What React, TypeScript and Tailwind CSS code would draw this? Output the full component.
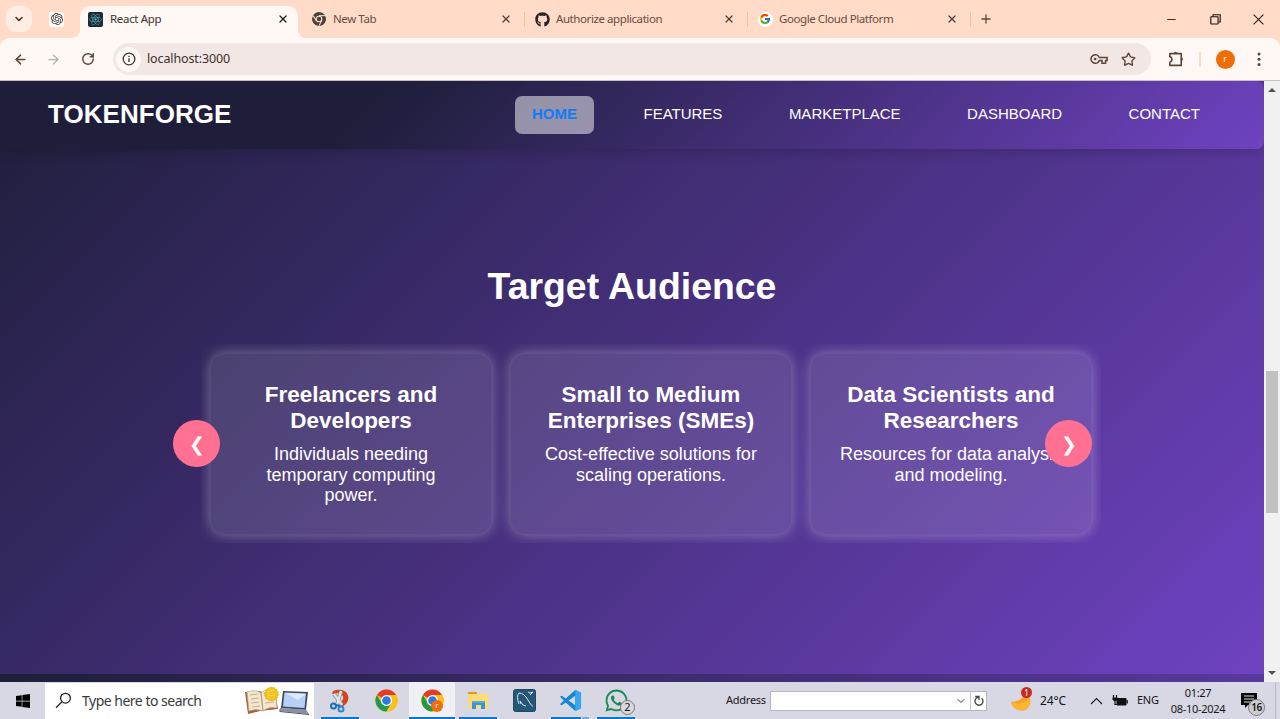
import React from "react";
import { X, Plus, ArrowLeft, ArrowRight, RotateCw, ChevronDown, ChevronUp, Minus, Star } from "lucide-react";
import { FaGithub, FaWindows, FaWhatsapp, FaReact } from "react-icons/fa";
import { FcGoogle } from "react-icons/fc";
import { SiOpenai } from "react-icons/si";
import { VscVscode } from "react-icons/vsc";

function ChromeIcon({ size, mono = false }: { size: number; mono?: boolean }) {
  const c = mono ? ["#4a4340", "#4a4340", "#4a4340"] : ["#e33b2e", "#fbc116", "#229a48"];
  const gap = mono ? "#ffdbc8" : "none";
  return (
    <svg width={size} height={size} viewBox="0 0 48 48">
      <circle cx="24" cy="24" r="23" fill={c[1]} />
      <path d="M24 24 4 12.5A23 23 0 0 1 44 12.5L34.4 18Z" fill={c[0]} stroke="none" />
      <path d="M4 12.5A23 23 0 0 0 24 47L34 29.5 24 34 14.5 30.5Z" fill={c[2]} />
      <path d="M4 12.5 14.5 30.5M44 13H24M24 47 34 29.5" stroke={gap} strokeWidth="3" fill="none" />
      <path d="M24 12.5H44.5A23 23 0 0 1 24 47L34 30Z" fill={c[1]} />
      {mono && <path d="M24 12.5H44.5M4 12.5 15 30M24 47 34 29" stroke={gap} strokeWidth="3" />}
      <circle cx="24" cy="24" r="11.5" fill={mono ? gap : "#fff"} />
      <circle cx="24" cy="24" r={mono ? 7.5 : 9} fill={mono ? c[0] : "#2c7be5"} />
    </svg>
  );
}

function Tab({ icon, title, divider }: { icon: React.ReactNode; title: string; divider?: boolean }) {
  return (
    <div className="relative flex h-[38px] w-[223px] items-center pr-[9px] pl-[13px] text-[#6b4b3f]">
      <span className="flex w-4 justify-center">{icon}</span>
      <span className="ml-[6px] flex-1 text-[11.5px] tracking-[-0.42px]">{title}</span>
      <X size={12} strokeWidth={2.5} color="#523d34" />
      {divider && <span className="absolute -right-[4px] h-[15px] w-[1.5px] bg-[#ffbd94]" />}
    </div>
  );
}

function Browser() {
  return (
    <div className="h-[81px] bg-[#ffdbc8] text-[#3e302b]" style={{ fontFamily: '"Noto Sans", sans-serif' }}>
      <div className="flex h-[38px] items-center">
        <div className="ml-[6px] flex size-[26px] items-center justify-center rounded-[9px] bg-[#ffede4]">
          <ChevronDown size={12} strokeWidth={3} />
        </div>
        <div className="ml-[17px] flex size-[15px] items-center justify-center rounded-[3px] bg-white">
          <SiOpenai size={12} />
        </div>
        <div className="relative ml-[16px] flex h-[32px] w-[218px] items-center self-end rounded-t-[10px] bg-[#fff8f5] pr-[9px] pb-[6px] pl-[8px]">
          <svg className="absolute bottom-0 -left-2" width="8" height="8"><path d="M8 0V8H0A8 8 0 0 0 8 0Z" fill="#fff8f5" /></svg>
          <svg className="absolute -right-2 bottom-0" width="8" height="8"><path d="M0 0V8H8A8 8 0 0 1 0 0Z" fill="#fff8f5" /></svg>
          <span className="flex size-[15px] items-center justify-center rounded-[2px] bg-[#20292f]">
            <FaReact size={13} color="#4aa9c4" />
          </span>
          <span className="ml-[7px] flex-1 text-[11.5px] tracking-[-0.32px]">React App</span>
          <X size={12} strokeWidth={2.5} color="#221a17" />
        </div>
        <Tab icon={<ChromeIcon size={14} mono />} title="New Tab" divider />
        <Tab icon={<FaGithub size={15} color="#292322" />} title="Authorize application" divider />
        <Tab icon={<span className="rounded-full bg-white p-[1.5px]"><FcGoogle size={12} /></span>} title="Google Cloud Platform" divider />
        <Plus className="ml-[12px]" size={14} strokeWidth={2.2} color="#5c4439" />
        <div className="ml-auto flex items-center gap-[32px] pr-[16px]">
          <Minus size={13} strokeWidth={2} />
          <svg width="11" height="11" viewBox="0 0 11 11" fill="none" stroke="#17110e" strokeWidth="1.1">
            <rect x="0.8" y="2.7" width="7.3" height="7.3" rx=".5" /><path d="M3 2.5V.8H10.2V8H8.3" />
          </svg>
          <svg width="11" height="11" viewBox="0 0 11 11" stroke="#2b211d" strokeWidth="1.1"><path d="M.6.6 10.4 10.4M10.4.6.6 10.4" /></svg>
        </div>
      </div>
      <div className="flex h-[43px] items-center rounded-t-[9px] border-b border-[#c9bfc4] bg-[#fff8f5] pl-[13px]">
        <ArrowLeft size={15} color="#5c4439" strokeWidth={2.3} />
        <ArrowRight className="ml-[18px]" size={15} color="#b5aaa6" strokeWidth={2} />
        <RotateCw className="ml-[20px]" size={14} color="#5c4439" strokeWidth={2.5} />
        <div className="ml-[18px] flex h-[32px] w-[1038px] items-center rounded-full bg-[#f2e7e4] pr-[15px] pl-[3px]">
          <span className="flex size-[25px] items-center justify-center rounded-full bg-[#fff8f5]">
            <svg width="14" height="14" viewBox="0 0 14 14" fill="none" stroke="#3f3532"><circle cx="7" cy="7" r="5.8" strokeWidth="1.3" /><path d="M7 6.2V10M7 3.8V5.1" strokeWidth="1.4" /></svg>
          </span>
          <span className="ml-[6px] flex-1 pt-px text-[12.5px] tracking-[-0.12px]">localhost:3000</span>
          <svg width="18" height="12" viewBox="0 0 18 12" fill="none" stroke="#5c4439" strokeWidth="1.5"><path d="M9.3 4.6A4.3 4.3 0 1 0 9.3 7.4H12V10.2H15.6V7.4H17.1V4.6Z" /><circle cx="5.2" cy="6" r="1.3" fill="#5c4439" stroke="none" /></svg>
          <Star className="ml-[13px]" size={15} color="#5c4439" strokeWidth={2.2} />
        </div>
        <svg className="ml-[17px]" width="17" height="18" viewBox="0 0 17 18" fill="none" stroke="#5c4439" strokeWidth="1.6"><path d="M1.8 3.6H13.2V15.4H1.8V12.2C4.5 11.8 4.5 7.2 1.8 6.8Z" strokeLinejoin="round" /><path d="M5.8 3.5A1.9 1.9 0 0 1 9.4 3.5ZM13.4 7.5A1.9 1.9 0 0 1 13.4 11Z" fill="#5c4439" strokeWidth=".8" /></svg>
        <span className="ml-[14px] h-[15px] w-[1.5px] bg-[#ffdbc8]" />
        <span className="ml-[15px] flex size-[19px] items-center justify-center rounded-full bg-[#f06c05] text-[9px] text-white">r</span>
        <svg className="ml-[22px]" width="4" height="15" fill="#5c4439"><circle cx="2" cy="2" r="1.5" /><circle cx="2" cy="7.3" r="1.5" /><circle cx="2" cy="12.6" r="1.5" /></svg>
      </div>
    </div>
  );
}

function Header() {
  return (
    <header className="relative flex h-[68px] items-center rounded-r-lg bg-[linear-gradient(135deg,#1e1e3a_30%,#6f42c1_100%)] pr-[47px] pb-px pl-[48px] shadow-[0_4px_10px_rgba(0,0,0,0.15)]">
      <div className="text-[26px] font-bold tracking-[0.05px]">TOKENFORGE</div>
      <nav className="ml-auto flex items-center gap-[32.5px] text-[15px]">
        <a className="flex h-[38px] w-[79px] items-center justify-center rounded-[7px] bg-white/50 font-bold text-[#147bf4]">HOME</a>
        <a className="px-[17px]">FEATURES</a>
        <a className="px-[17px]">MARKETPLACE</a>
        <a className="px-[17px]">DASHBOARD</a>
        <a className="px-[17px]">CONTACT</a>
      </nav>
    </header>
  );
}

const audience = [
  { title: ["Freelancers and", "Developers"], text: ["Individuals needing", "temporary computing", "power."] },
  { title: ["Small to Medium", "Enterprises (SMEs)"], text: ["Cost-effective solutions for", "scaling operations."] },
  { title: ["Data Scientists and", "Researchers"], text: ["Resources for data analysis", "and modeling."] },
];

function Page() {
  return (
    <div className="flex h-[601px]">
      <div className="flex w-[1264px] flex-col overflow-hidden text-white" style={{ fontFamily: '"Liberation Sans", Arial, sans-serif' }}>
        <section className="h-[593px] bg-[linear-gradient(135deg,#1e1e3a,#6f42c1)]">
          <Header />
          <h2 className="mt-[113px] text-center text-[37.4px] leading-[48px] font-bold">Target Audience</h2>
          <div className="relative mt-[34px] ml-[173px] w-[928px] pl-[28px]">
            <div className="flex h-[199px] w-[900px] overflow-hidden">
              {audience.map((a) => (
                <div key={a.title[0]} className="w-[300px] shrink-0 px-[9px] pt-[9px]">
                  <div className="h-[182px] rounded-[15px] border border-white/5 bg-white/12 pt-[28px] text-center shadow-[0_0_14px_rgba(255,255,255,0.34)]">
                    <h3 className="text-[22.5px] leading-[26px] font-bold">{a.title.map((t) => <div key={t}>{t}</div>)}</h3>
                    <p className="mt-[10px] text-[18px] leading-[20.5px]">{a.text.map((t) => <span className="block" key={t}>{t}</span>)}</p>
                  </div>
                </div>
              ))}
            </div>
            <button className="absolute top-[76px] left-0 flex size-[47px] items-center justify-center rounded-full bg-[#ff7092] pt-[3px] text-[19px]">❮</button>
            <button className="absolute top-[76px] left-[872px] flex size-[47px] items-center justify-center rounded-full bg-[#ff7092] pt-[3px] text-[19px]">❯</button>
          </div>
        </section>
        <div className="h-[8px] bg-[linear-gradient(90deg,#1e1e3a,#58389e)]" />
      </div>
      <div className="flex flex-1 flex-col items-center bg-[#f1f1f1] py-[6px]">
        <svg width="8" height="5"><path d="M0 5 4 1 8 5Z" fill="#505050" /></svg>
        <div className="mt-[279px] h-[142px] w-[12px] bg-[#c1c1c1]" />
        <svg className="mt-auto" width="8" height="5"><path d="M0 0 4 4 8 0Z" fill="#505050" /></svg>
      </div>
    </div>
  );
}

function Task({ children, open, active, narrow }: { children: React.ReactNode; open?: boolean; active?: boolean; narrow?: boolean }) {
  return (
    <div className={`relative flex h-full w-[46px] shrink-0 items-center justify-center ${active ? "bg-[#f0eff6]" : ""}`}>
      {children}
      {open && <span className={`absolute bottom-0 h-[2px] bg-[#0b78d0] ${active ? "w-[46px]" : narrow ? "left-[4px] w-[30px]" : "w-[38px]"}`} />}
    </div>
  );
}

function Taskbar() {
  return (
    <div className="flex h-[37px] items-center bg-[#d8d7e4] text-[#161616]" style={{ fontFamily: '"Noto Sans", sans-serif' }}>
      <div className="flex w-[45px] justify-center"><FaWindows size={16} color="#000" /></div>
      <div className="flex h-[36px] w-[269px] items-center bg-white pl-[10px]">
        <svg width="17" height="17" viewBox="0 0 17 17" fill="none" stroke="#222" strokeWidth="1.3"><circle cx="10.5" cy="6.2" r="4.9" /><path d="M7 9.8 1 15.7" /></svg>
        <span className="ml-[10px] flex-1 text-[14px] tracking-[-0.5px] text-[#3a3a3a]">Type here to search</span>
        <svg className="mr-[4px]" width="66" height="30" viewBox="0 0 66 30">
          <path d="M1 6 4 28 16 25 34 23 31 4 19 6 15 5Z" fill="#a95d3c" />
          <path d="M3 6Q12 3 17 7L19 25Q12 22 5 25ZM17 7Q24 1 31 4L33 22Q25 20 19 25Z" fill="#f2e6cd" stroke="#bcab8d" strokeWidth=".7" />
          <path d="M6 9 14 8M7 13 15 12M7 17 15 16M8 21 16 20M20 9 27 7M21 13 29 12M21 17 30 16M17 7 19 25" stroke="#aa9c83" strokeWidth=".7" />
          <circle cx="27.5" cy="8" r="6.7" fill="#f3c51c" stroke="#ddb000" strokeDasharray="2 1" />
          <path d="M24 6 30 4M24 10 31 9" stroke="#f9df63" />
          <path d="M39 5 64 6 62 24 37 22Z" fill="#43495a" /><path d="M40.5 6.5 62 7.5 60.5 22 39 20.5Z" fill="#b5d2f6" /><path d="M41 7 62 8 54 14Z" fill="#dceafc" />
          <path d="M36 22 62 23.5 65 28 35 25Z" fill="#8a90a4" /><path d="M35 25 65 28V29L36 26Z" fill="#484b5d" />
        </svg>
      </div>
      <div className="ml-[3px] flex h-full">
        <Task open>
          <svg width="22" height="24" viewBox="0 0 22 24"><path d="M4 2Q12-1 17 3Q22 9 17 15L13 18 10 14Q15 12 14 7L10 4 3 5Z" fill="#d8431f" /><path d="M5 5 13 16M12 2 8 16" stroke="#8d9498" strokeWidth="4" /><path d="M5 5 13 16M12 2 8 16" stroke="#dfe4e6" strokeWidth="2.4" /><circle cx="4.5" cy="17" r="2.5" fill="none" stroke="#1d6fb5" strokeWidth="2" /><circle cx="12" cy="20" r="2.5" fill="none" stroke="#2c83c8" strokeWidth="2" /><path d="m7 16 4 1" stroke="#1d6fb5" strokeWidth="2" /></svg>
        </Task>
        <Task><ChromeIcon size={23} /></Task>
        <Task open active>
          <ChromeIcon size={23} />
          <span className="absolute top-[18px] left-[22px] flex size-[12px] items-center justify-center rounded-full bg-[#f06c0c] text-[7px] text-white">r</span>
        </Task>
        <Task open>
          <svg width="21" height="19" viewBox="0 0 21 19"><path d="M0 1H9V4H0Z" fill="#dc9d20" /><path d="M0 3H20V17H0Z" fill="#ffdc72" /><path d="M4 18V10H17V18H13V14H8V18Z" fill="#3d93d2" /><path d="M4 10H17V12H4Z" fill="#51acdf" /></svg>
        </Task>
        <Task>
          <svg width="23" height="23" viewBox="0 0 23 23"><rect x=".5" y=".5" width="22" height="22" rx="2" fill="#245778" stroke="#204861" /><path d="M6 15Q3 7 6 4Q11 4 15 11T20 17M8 15 7 12 10 16 13 17M15 3 17 4 20 3 17 6" fill="none" stroke="#d9e8ef" strokeWidth="1" /></svg>
        </Task>
        <Task open narrow>
          <svg width="23" height="23" viewBox="0 0 24 24"><path d="M17 1 7 10 3 7 1 8 5 12 1 16 3 17 7 14 17 23 23 20V4ZM17 7V17L10 12Z" fill="#1688cf" fillRule="evenodd" /><path d="M17 1 23 4V20L17 23Z" fill="#36a8ef" /></svg>
          <span className="absolute right-[4px] bottom-0 h-[2px] w-[7px] bg-[#78acd9]" />
        </Task>
        <Task open>
          <FaWhatsapp size={25} color="#168a55" />
          <span className="absolute top-[18px] left-[27px] flex size-[15px] items-center justify-center rounded-full border border-[#777] bg-[#d9d9df] text-[11px]">2</span>
        </Task>
      </div>
      <div className="ml-auto flex h-full w-[554px] shrink-0 items-center text-[11px]">
        <span className="w-[44px] tracking-[-0.25px]">Address</span>
        <div className="flex h-[20px] w-[217px] items-center border border-[#b6b6bd] bg-white">
          <ChevronDown className="mr-[3px] ml-auto" size={12} color="#444" />
          <span className="flex h-full w-[16px] items-center justify-center border-l border-[#c5c5ca]">
            <svg width="10" height="12" viewBox="0 0 10 12" fill="none" stroke="#444" strokeWidth="1.3"><path d="M7.6 3.2A4 4 0 1 1 2.3 3.3L4.8 1.8M1.2 1.5H5V5" /></svg>
          </span>
        </div>
        <div className="relative ml-[23px] h-[25px] w-[25px]">
          <svg width="23" height="25" viewBox="0 0 23 25"><path d="M14 4Q14 13 1 14C3 24 17 26 20 16Q22 9 14 4Z" fill="#f4a328" /><path d="M1 14Q12 19 19 10L20 15C17 25 3 24 1 14Z" fill="#ffb52d" /></svg>
          <span className="absolute -top-[1px] left-[11px] flex size-[11px] items-center justify-center rounded-full bg-[#c52b22] text-[8px] text-white">1</span>
        </div>
        <span className="ml-[5px] w-[50px] text-[12px] tracking-[-0.1px]">24°C</span>
        <svg width="13" height="8" viewBox="0 0 13 8" fill="none" stroke="#222" strokeWidth="1.2"><path d="M1 7 6.5 1.5 12 7" /></svg>
        <svg className="ml-[9px]" width="16" height="12" viewBox="0 0 16 12"><path d="M5 3.5H14V10H5Z" fill="#111" stroke="#111" /><path d="M15.2 5V8.5M1.5 0V3M4.5 0V3M3 6V9.5H5" fill="none" stroke="#111" strokeWidth="1.2" /><path d="M.5 2.5H5.5V4.5L4 6H2L.5 4.5Z" fill="#111" /></svg>
        <span className="ml-[9px] w-[32px] tracking-[-0.3px]">ENG</span>
        <div className="w-[58px] text-center text-[11px] leading-[16px] tracking-[-0.28px]"><div>01:27</div><div>08-10-2024</div></div>
        <div className="relative ml-[14px] h-[18px] w-[25px]">
          <svg width="17" height="17" viewBox="0 0 17 17"><path d="M0 1H16V13H7L4 16V13H0Z" fill="#080808" /><path d="M3 4H13M3 7H13M3 10H10" stroke="#ddd" strokeWidth="1" /></svg>
          <span className="absolute top-[7px] left-[7px] flex size-[17px] items-center justify-center rounded-full border border-[#777] bg-[#cdcdd1] text-[10px] font-semibold tracking-[-0.5px]">16</span>
        </div>
        <span className="mr-[4px] ml-auto h-full w-px bg-[#bbbac8]" />
      </div>
    </div>
  );
}

export default function App() {
  return (
    <div className="flex h-[719px] w-[1280px] flex-col overflow-hidden">
      <Browser />
      <Page />
      <Taskbar />
    </div>
  );
}
